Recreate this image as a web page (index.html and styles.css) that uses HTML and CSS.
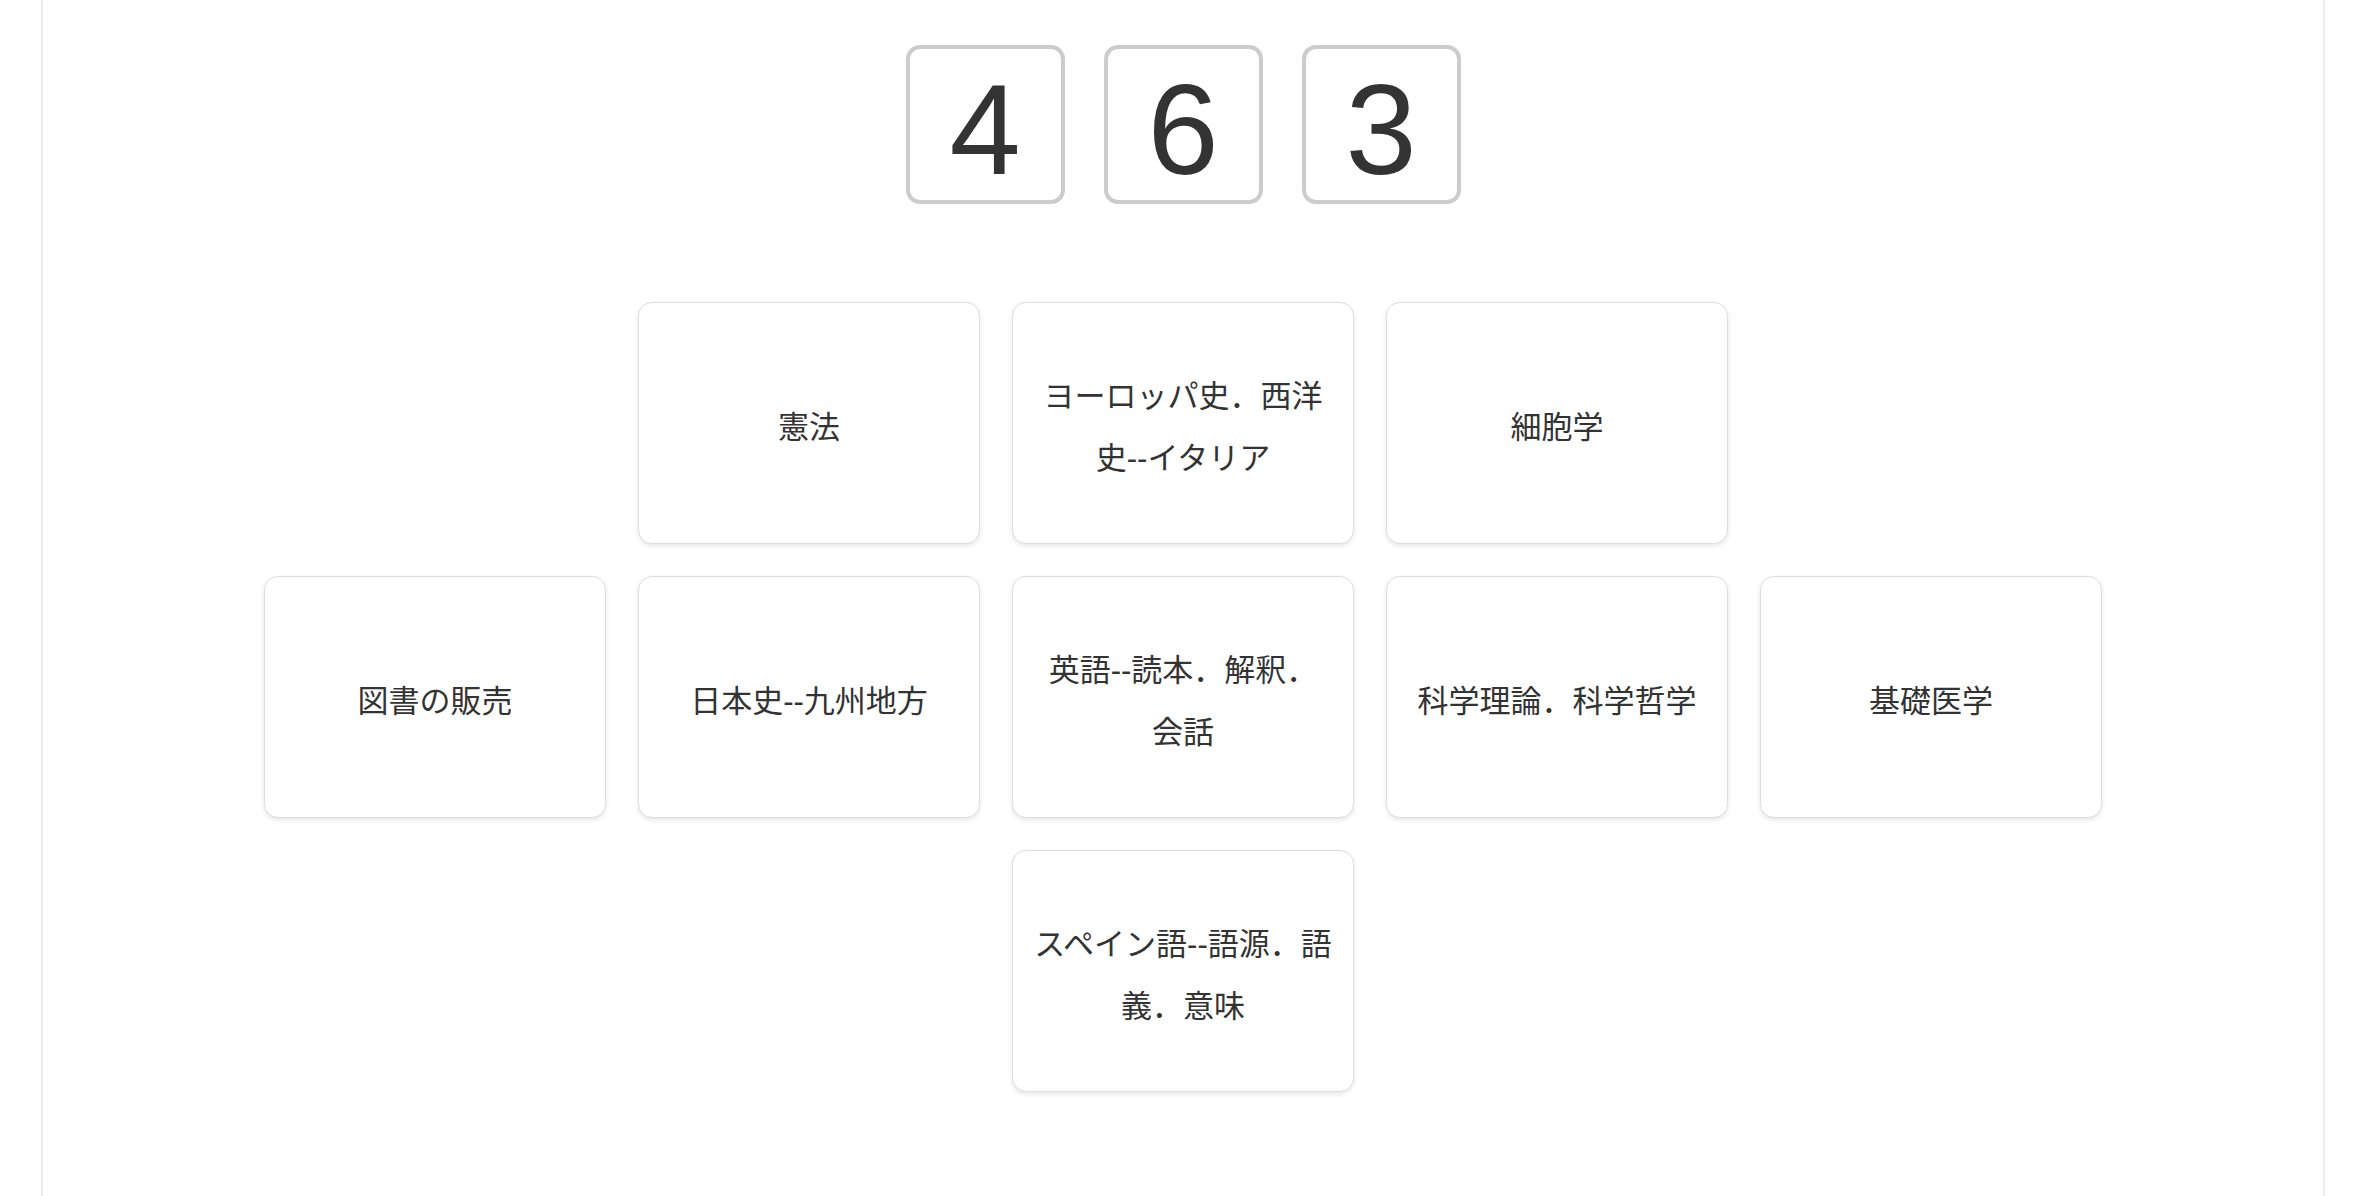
FILE: index.html
```html
<!DOCTYPE html>
<html lang="ja">
<head>
<meta charset="utf-8">
<title>Cards</title>
<link rel="stylesheet" href="styles.css">
</head>
<body>
<div class="page">
  <div class="digits">
    <div class="digit">4</div>
    <div class="digit">6</div>
    <div class="digit">3</div>
  </div>
  <div class="board">
    <div class="row">
      <div class="card">憲法</div>
      <div class="card">ヨーロッパ史．西洋史--イタリア</div>
      <div class="card">細胞学</div>
    </div>
    <div class="row">
      <div class="card">図書の販売</div>
      <div class="card">日本史--九州地方</div>
      <div class="card">英語--読本．解釈．会話</div>
      <div class="card">科学理論．科学哲学</div>
      <div class="card">基礎医学</div>
    </div>
    <div class="row">
      <div class="card">スペイン語--語源．語義．意味</div>
    </div>
  </div>
</div>
</body>
</html>
```

FILE: styles.css
```css
html, body {
  margin: 0;
  padding: 0;
  background: #ffffff;
}

body {
  font-family: "Liberation Sans", Arial, "Noto Sans CJK JP", sans-serif;
  color: #333333;
}

.page {
  box-sizing: border-box;
  margin-left: 41px;
  width: 2284px;
  min-height: 100vh;
  border-left: 2px solid #e9e9ef;
  border-right: 2px solid #e9e9ef;
  padding-top: 45px;
}

.digits {
  display: flex;
  justify-content: center;
  gap: 39px;
}

.digit {
  box-sizing: border-box;
  width: 159px;
  height: 159px;
  border: 4px solid #cccccc;
  border-radius: 14px;
  display: flex;
  align-items: center;
  justify-content: center;
  padding-top: 10px;
  font-family: "Liberation Sans", Arial, sans-serif;
  font-size: 128px;
  line-height: 1;
  color: #333333;
}

.board {
  margin-top: 98px;
  display: flex;
  flex-direction: column;
  gap: 32px;
}

.row {
  display: flex;
  justify-content: center;
  gap: 32px;
}

.card {
  box-sizing: border-box;
  width: 342px;
  height: 242px;
  padding: 9px 16px 0;
  border: 1px solid #dedede;
  border-radius: 14px;
  background: #ffffff;
  box-shadow: 0 2px 5px rgba(0, 0, 0, 0.1);
  display: flex;
  align-items: center;
  justify-content: center;
  text-align: center;
  text-wrap: pretty;
  font-family: "Liberation Sans", Arial, "Noto Sans CJK JP", sans-serif;
  font-size: 31px;
  line-height: 62px;
  color: #333333;
}
```
